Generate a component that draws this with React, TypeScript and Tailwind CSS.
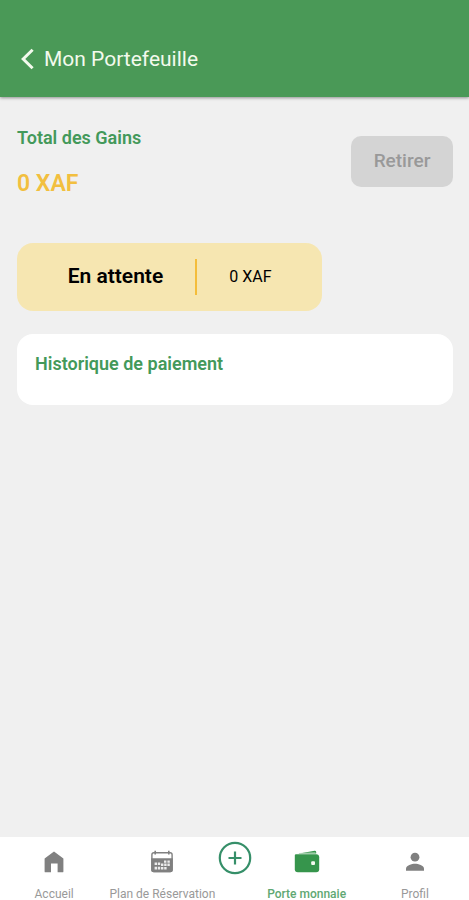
import type { ReactNode } from 'react';

type NavItemProps = {
  label: string;
  active?: boolean;
  children: ReactNode;
};

function NavItem({ label, active = false, children }: NavItemProps) {
  return (
    <a
      href="#"
      aria-current={active ? 'page' : undefined}
      className={`flex flex-1 flex-col items-center gap-3 whitespace-nowrap text-[12px] leading-4 ${
        active ? 'font-medium text-[#5fa873]' : 'text-[#999999]'
      }`}
    >
      {children}
      <span>{label}</span>
    </a>
  );
}

function HomeIcon() {
  return (
    <svg width="24" height="24" viewBox="0 0 24 24" fill="#808080" aria-hidden="true">
      <path d="M12 1.5 21.4 8.6V21.4Q21.4 22.3 20.5 22.3H15.6V13.6H9V22.3H3.5Q2.6 22.3 2.6 21.4V8.6Z" />
    </svg>
  );
}

function CalendarIcon() {
  return (
    <svg width="24" height="24" viewBox="0 0 24 24" fill="none" aria-hidden="true">
      <rect x="1.9" y="2.8" width="20.2" height="18.8" rx="2" fill="#fff" stroke="#808080" strokeWidth="1.4" />
      <path d="M1.2 8.2H22.8V19.8Q22.8 22.3 20.3 22.3H3.7Q1.2 22.3 1.2 19.8Z" fill="#808080" />
      <path d="M5.2 .8V4.5M18.8 .8V4.5" stroke="#808080" strokeWidth="1.6" />
      <path
        d="M14 10.4h2.4v2.4H14zM17.4 10.4h2.4v2.4h-2.4zM4.6 12.6H7V15H4.6zM7.8 12.6h2.4V15H7.8zM11 13.4h2.4V16H11zM14.2 13.6h2.4V16h-2.4zM17.4 13.6h2.4V16h-2.4zM4.6 16.8H7v2.6H4.6zM7.8 16.8h2.4v2.6H7.8zM11 17h2.4v2.4H11zM14.2 17h2.4v2.4h-2.4z"
        fill="#ececec"
      />
    </svg>
  );
}

function WalletIcon() {
  return (
    <svg width="26" height="24" viewBox="0 0 26 24" fill="#36954c" aria-hidden="true">
      <path d="M2.6 4.1 20.6 .7Q22 .6 22.2 2.1V3.4H5Z" />
      <path d="M5 3.5 21.4 2.7" stroke="#a8d0b0" strokeWidth=".8" />
      <path d="M.8 5.2Q.8 4.2 2 4.2H22.2Q25.2 4.2 25.2 7.2V19.3Q25.2 22.3 22.2 22.3H3.8Q.8 22.3 .8 19.3Z" />
      <rect x="17.2" y="11.3" width="3.8" height="3.8" rx="1" fill="#f4faf0" />
    </svg>
  );
}

function ProfileIcon() {
  return (
    <svg width="24" height="24" viewBox="0 0 24 24" fill="#808080" aria-hidden="true">
      <circle cx="12" cy="7.2" r="4.4" />
      <path d="M3 20.8V18.6C3 15.5 8.8 13.8 12 13.8S21 15.5 21 18.6V20.8Z" />
    </svg>
  );
}

export default function App() {
  return (
    <div className="flex h-screen flex-col overflow-hidden bg-[#f0f0f0] font-[Roboto,sans-serif]">
      <header className="flex items-center bg-[#4a9957] px-5 pt-[45px] pb-6 text-[#f3faed] shadow-[0_1px_3px_rgba(0,0,0,0.4)]">
        <button type="button" aria-label="Retour" className="mr-2">
          <svg width="16" height="24" viewBox="0 0 16 24" fill="none" stroke="currentColor" strokeWidth="3" aria-hidden="true">
            <path d="M12.6 2.8 3.2 12 12.6 21.2" />
          </svg>
        </button>
        <h1 className="text-[21px] leading-7">Mon Portefeuille</h1>
      </header>

      <main className="flex flex-1 flex-col pt-[29px] pr-4 pl-[17px]">
        <section className="flex items-start justify-between">
          <div>
            <h2 className="text-[18px] leading-6 font-semibold text-[#43995a]">Total des Gains</h2>
            <p className="mt-[18px] text-[23px] leading-8 font-semibold text-[#f2bf3f]">0 XAF</p>
          </div>
          <button
            type="button"
            disabled
            className="mt-2.5 h-[51px] w-[102px] rounded-[10px] bg-[#d4d4d4] text-[19px] font-medium text-[#999999]"
          >
            Retirer
          </button>
        </section>

        <section className="mt-[43px] flex h-17 w-[70%] items-center justify-center rounded-2xl bg-[#f6e6b1] text-black">
          <h2 className="text-[21px] font-semibold">En attente</h2>
          <div className="mx-8 h-9 w-0.5 bg-[#f4bd3a]" />
          <p className="text-[16px]">0 XAF</p>
        </section>

        <section className="mt-[23px] rounded-2xl bg-white px-[18px] pt-[18px] pb-[29px]">
          <h2 className="text-[18px] leading-6 font-semibold text-[#43995a]">Historique de paiement</h2>
        </section>
      </main>

      <nav className="flex h-[63px] items-start bg-white pt-[13px]">
        <NavItem label="Accueil">
          <HomeIcon />
        </NavItem>
        <NavItem label="Plan de Réservation">
          <CalendarIcon />
        </NavItem>
        <button type="button" aria-label="Ajouter" className="-mt-2.5 w-9">
          <svg width="36" height="36" viewBox="0 0 36 36" fill="none" stroke="#368f69" strokeWidth="2.2" aria-hidden="true">
            <circle cx="18" cy="18" r="15.2" />
            <path d="M18 11.5V24.5M11.5 18H24.5" />
          </svg>
        </button>
        <NavItem label="Porte monnaie" active>
          <WalletIcon />
        </NavItem>
        <NavItem label="Profil">
          <ProfileIcon />
        </NavItem>
      </nav>
    </div>
  );
}
